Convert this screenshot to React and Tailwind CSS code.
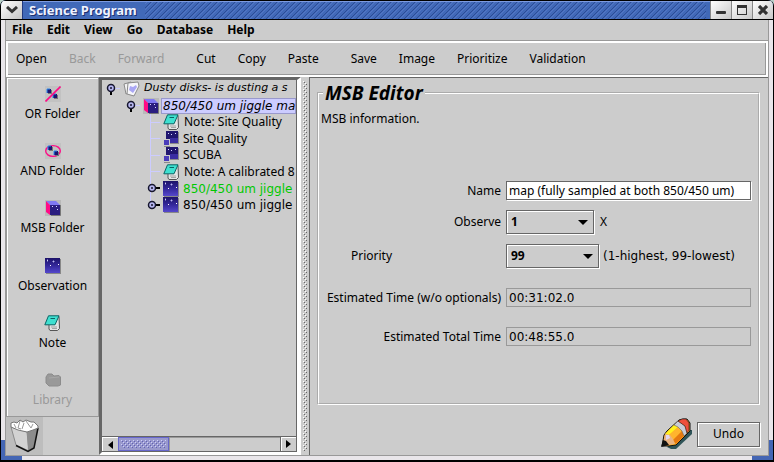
import React from "react";

const MENUS = ["File", "Edit", "View", "Go", "Database", "Help"];

const TOOL_GROUPS = [
  [{ label: "Open" }, { label: "Back", disabled: true }, { label: "Forward", disabled: true }],
  [{ label: "Cut" }, { label: "Copy" }, { label: "Paste" }],
  [{ label: "Save" }, { label: "Image" }, { label: "Prioritize" }, { label: "Validation" }],
];

function Cubelet({ x, y, s = 5 }) {
  return (
    <g>
      <rect x={x + 1} y={y + 1} width={s} height={s} fill="#777" />
      <rect x={x} y={y} width={s} height={s} fill="#1c1470" />
      <path d={`M${x} ${y + s}V${y}H${x + s - 1}`} stroke="#2a8cf0" fill="none" />
    </g>
  );
}

function OrIcon() {
  return (
    <svg width="16" height="16" viewBox="0 0 16 16" aria-hidden="true">
      <rect width="16" height="16" fill="#c2c2c2" />
      <Cubelet x={2} y={3} s={4} />
      <Cubelet x={8} y={8} s={4} />
      <path d="M0.5 15.5L15.5 0.5" stroke="#ff0a86" strokeWidth="1.6" />
    </svg>
  );
}

function AndIcon() {
  return (
    <svg width="16" height="16" viewBox="0 0 16 16" aria-hidden="true">
      <rect width="16" height="16" fill="#c2c2c2" />
      <ellipse cx="8" cy="8" rx="7.3" ry="5.4" fill="none" stroke="#ff0a86" strokeWidth="1.4" />
      <Cubelet x={3} y={3} s={4} />
      <Cubelet x={9} y={8} s={4} />
    </svg>
  );
}

function MsbIcon() {
  return (
    <svg width="16" height="16" viewBox="0 0 16 16" className="shrink-0" aria-hidden="true">
      <rect width="16" height="16" fill="#b9b9b9" />
      <path d="M1 1H11L15 5H5Z" fill="#7f78f2" />
      <path d="M1 1L5 5V15L1 12Z" fill="#ff0a86" />
      <rect x="5" y="5" width="10" height="10" fill="#2a1d80" />
      <path d="M7 6h1v1h-1zM11 6h1v1h-1zM12 9h1v1h-1z" fill="#d8d8ff" />
      <path d="M6 15.5H15.5V5" stroke="#777" fill="none" />
    </svg>
  );
}

function ObservationIcon() {
  return (
    <svg width="16" height="16" viewBox="0 0 16 16" className="shrink-0" aria-hidden="true">
      <defs>
        <linearGradient id="night" x1="0" y1="0" x2="0" y2="1">
          <stop offset="0" stopColor="#1c1268" />
          <stop offset="0.5" stopColor="#33279a" />
          <stop offset="1" stopColor="#5548cc" />
        </linearGradient>
      </defs>
      <rect x="1" y="1" width="15" height="15" fill="#888" />
      <rect width="15" height="15" fill="url(#night)" />
      <path d="M2 2h1v1h-1zM8 3h1v1h-1zM5 7h1v1h-1zM13 6h1v1h-1z" fill="#fff" />
      <path d="M7 3.500h3M8.500 2v3M2.500 1v3" stroke="#a7a0e8" strokeWidth="0.500" />
    </svg>
  );
}

function ComponentIcon() {
  return (
    <svg width="16" height="16" viewBox="0 0 16 16" className="shrink-0" aria-hidden="true">
      <path d="M4 1h12v12h-9v3H1V10h3z" fill="#8a8a8a" />
      <rect x="3" y="0" width="12" height="11" fill="#20166f" />
      <rect x="7" y="7" width="8" height="5" fill="#3a2da2" />
      <rect x="0" y="8" width="7" height="7" fill="#cbcbcb" />
      <rect x="1" y="9" width="5" height="5" fill="#4a3cba" />
      <path d="M5 2h1v1h-1zM8 3h1v1h-1zM12 2h1v1h-1z" fill="#d8d8ff" />
    </svg>
  );
}

function NoteIcon() {
  return (
    <svg width="17" height="16" viewBox="0 0 17 16" className="shrink-0" aria-hidden="true">
      <path d="M6 4L15 1.500L15.500 13.500L13.500 15.500H6L5 14V10" fill="#e4e4e4" stroke="#555" />
      <path d="M7 12h6M8 13.500h5" stroke="#a5a5a5" />
      <path d="M4.500 0.800H15L11 9.800H0.800Z" fill="#3fe0d0" stroke="#0b6464" />
      <path d="M6.500 3.500H11" stroke="#0b6464" />
    </svg>
  );
}

function LibraryIcon() {
  return (
    <svg width="16" height="16" viewBox="0 0 16 16" aria-hidden="true">
      <path d="M1 5L3 2H7L9 4L14 3.500L15.500 5V13L13 14H4L1 11Z" fill="#999" stroke="#8c8c8c" />
      <path d="M4 6L9 5.500L14 5" stroke="#a8a8a8" fill="none" />
    </svg>
  );
}

function ProgramIcon() {
  return (
    <svg width="17" height="16" viewBox="0 0 17 16" className="shrink-0" aria-hidden="true">
      <path d="M1 3L8 1L10 11L3 13Z" fill="#f2f2f2" stroke="#8a8a8a" />
      <path d="M5 2L15 1L16 5L11 15L4 13Z" fill="#f6f6fa" stroke="#8a8a8a" />
      <path d="M7 5L10 6L13 4L14 6L10 12L6 9Z" fill="#a9a6f4" />
    </svg>
  );
}

function TrashIcon() {
  return (
    <svg width="37" height="38" viewBox="0 0 37 38" className="bg-[#bdbdbd]" aria-hidden="true">
      <path d="M5 10L21 15L23 34L10 28Z" fill="#d2d2d2" stroke="#8a8a8a" />
      <path d="M21 15L32 11L28 31L22 34Z" fill="#8c8c8c" />
      <path d="M32 11L28 31L22 34.500L10 28.500" fill="none" stroke="#111" strokeWidth="1.500" />
      <path d="M5 10L5 6L8 5L11 6L14 3L17 5L20 3L25 5L28 5L32 9L32 11L27 13L21 15L12 13Z" fill="#fff" stroke="#777" />
      <path d="M8 7L10 11M14 4L12 11L15 12M18 6L16 12M20 4L25 11M27 7L25 11" stroke="#999" fill="none" />
    </svg>
  );
}

function PencilIcon() {
  return (
    <svg width="32" height="32" viewBox="0 0 32 32" aria-hidden="true">
      <path d="M6 29L10 31H15L31 16V12L28 12Z" fill="#2f5458" />
      <path d="M1 28L3 17L6 13L18 2L22 1H26L29 5V13L15 27L8 28Z" fill="#ffac1c" stroke="#111" />
      <path d="M4 16L13 7L17 9L8 17Z" fill="#fff21e" />
      <path d="M8 17L17 9L21 13L12 22Z" fill="#ffb52e" />
      <path d="M12 22L21 13L23 18L15 26Z" fill="#e67a10" />
      <path d="M13 7L17 3L24 8L26 15L23 18L21 13L17 9Z" fill="#c9ccd6" stroke="#555" strokeWidth="0.500" />
      <path d="M17 3L21 1H25L28 5V12L26 15L24 8Z" fill="#ee4f3c" stroke="#111" strokeWidth="0.500" />
      <path d="M4 16L9 17L12 21L14 26L7 27L2 26Z" fill="#e9b382" />
      <path d="M5 17L8 17L9 20L5 22Z" fill="#e2d6ee" />
      <path d="M0 29L2 22L5 23L8 27Z" fill="#111" />
    </svg>
  );
}

const PALETTE = [
  { label: "OR Folder", Icon: OrIcon },
  { label: "AND Folder", Icon: AndIcon },
  { label: "MSB Folder", Icon: MsbIcon },
  { label: "Observation", Icon: ObservationIcon },
  { label: "Note", Icon: NoteIcon },
  { label: "Library", Icon: LibraryIcon, disabled: true },
];

function Knob({ x, open }) {
  return (
    <g>
      <path d={open ? `M${x} 8V15` : `M${x} 8H${x + 8}`} stroke="#000" strokeWidth="2" />
      <circle cx={x} cy="8" r="3.500" fill="#b6b6f0" stroke="#16162e" strokeWidth="1.500" />
      <circle cx={x} cy="8" r="1" fill="#16162e" />
    </g>
  );
}

function RootGuide() {
  return (
    <svg width="21" height="17" className="shrink-0" aria-hidden="true">
      <path d="M13 8.500H18" stroke="#ccccff" />
      <Knob x={9} open />
    </svg>
  );
}

function FolderGuide() {
  return (
    <svg width="41" height="17" className="shrink-0" aria-hidden="true">
      <path d="M33 8.500H38" stroke="#ccccff" />
      <Knob x={29} open />
    </svg>
  );
}

function LeafGuide({ knob, last }) {
  return (
    <svg width="61" height="17" className="shrink-0" aria-hidden="true">
      <path d={last ? "M48.500 0V8" : "M48.500 0V17"} stroke="#ccccff" />
      {knob ? <Knob x={50} /> : <path d="M48 8.500H58" stroke="#ccccff" />}
    </svg>
  );
}

function Leaf({ icon, children, tall, knob, last, className = "" }) {
  return (
    <li role="treeitem" className={`flex items-center overflow-hidden ${tall ? "h-[17px]" : "h-4"}`}>
      <LeafGuide knob={knob} last={last} />
      {icon}
      <span className={className}>{children}</span>
    </li>
  );
}

function Tree() {
  return (
    <ul role="tree" aria-label="Science program" className="flex-1 whitespace-nowrap">
      <li role="treeitem" className="flex h-[17px] items-center">
        <RootGuide />
        <ProgramIcon />
        <span className="pl-1 font-['DejaVu_Sans',sans-serif] text-[11px] italic">Dusty disks- is dusting a s</span>
      </li>
      <li role="treeitem" aria-selected="true" className="flex h-[17px] items-center">
        <FolderGuide />
        <MsbIcon />
        <span className="ml-0.5 h-4 flex-1 border border-[#9999cc] bg-[#ccccff] pl-px font-['DejaVu_Sans',sans-serif] leading-[14px] italic">
          850/450 um jiggle ma
        </span>
      </li>
      <Leaf icon={<NoteIcon />} className="pl-1">Note: Site Quality</Leaf>
      <Leaf tall icon={<ComponentIcon />} className="pl-1">Site Quality</Leaf>
      <Leaf icon={<ComponentIcon />} className="pl-1">SCUBA</Leaf>
      <Leaf tall icon={<NoteIcon />} className="pl-1">Note: A calibrated 8</Leaf>
      <Leaf tall knob icon={<ObservationIcon />} className="pl-1 font-['DejaVu_Sans',sans-serif] text-[#00c800]">
        850/450 um jiggle
      </Leaf>
      <Leaf knob last icon={<ObservationIcon />} className="pl-1 font-['DejaVu_Sans',sans-serif]">
        850/450 um jiggle
      </Leaf>
    </ul>
  );
}

function ScrollBar() {
  return (
    <div className="flex h-4 border-y border-[#666] bg-[#cccccc]">
      <button aria-label="Scroll left" className="flex w-4 items-center justify-center border-l border-t border-white">
        <svg width="5" height="8" aria-hidden="true"><path d="M5 0V8L0 4Z" /></svg>
      </button>
      <div className="w-[51px] border border-[#6666cc] bg-[#9999cc] p-0.5">
        <svg width="100%" height="100%" aria-hidden="true">
          <defs>
            <pattern id="grip" width="4" height="4" patternUnits="userSpaceOnUse">
              <path d="M0 0h1v1H0zM2 2h1v1H2z" fill="#ccccff" />
              <path d="M1 1h1v1H1zM3 3h1v1H3z" fill="#6060b8" />
            </pattern>
          </defs>
          <rect width="100%" height="100%" fill="url(#grip)" />
        </svg>
      </div>
      <div className="flex-1 border-l border-t border-[#999]" />
      <button aria-label="Scroll right" className="flex w-4 items-center justify-center border-l border-[#666] shadow-[inset_1px_1px_#fff]">
        <svg width="5" height="8" aria-hidden="true"><path d="M0 0V8L5 4Z" /></svg>
      </button>
    </div>
  );
}

function Divider() {
  return (
    <div role="separator" aria-orientation="vertical" className="flex w-2 shrink-0 justify-center py-1">
      <svg width="4" height="100%" aria-hidden="true">
        <defs>
          <pattern id="bumps" width="4" height="4" patternUnits="userSpaceOnUse">
            <path d="M0 0h1v1H0zM2 2h1v1H2z" fill="#fff" />
            <path d="M1 1h1v1H1zM3 3h1v1H3z" fill="#666" />
          </pattern>
        </defs>
        <rect width="4" height="100%" fill="url(#bumps)" />
      </svg>
    </div>
  );
}

function Combo({ id, value, className }) {
  return (
    <div className={`relative ${className}`}>
      <select
        id={id}
        defaultValue={value}
        className="h-6 w-full appearance-none border border-[#666] bg-[#cccccc] pl-1 font-bold shadow-[1px_1px_#fff,inset_1px_1px_#fff]"
      >
        <option>{value}</option>
      </select>
      <svg width="10" height="5" className="pointer-events-none absolute right-1.5 top-2.5" aria-hidden="true">
        <path d="M0 0H10L5 5Z" />
      </svg>
    </div>
  );
}

function Editor() {
  return (
    <section className="flex min-w-0 flex-1 flex-col border-l border-t border-[#666] pt-[3px] pr-2 pl-[7px]">
      <fieldset className="min-w-0 flex-1 border-2 border-white px-0.5 [border-style:groove]">
        <legend className="ml-0.5 px-0.5 text-[19px] leading-6 font-bold italic">MSB Editor</legend>
        <p className="mt-1.5 leading-4">MSB information.</p>
        <div className="mt-[54px] grid grid-cols-[180px_1fr] items-center gap-x-[5px] pr-[5px] text-right">
          <label htmlFor="name">Name</label>
          <input
            id="name"
            defaultValue="map (fully sampled at both 850/450 um)"
            className="h-[19px] w-full min-w-0 border border-[#666] bg-white px-0.5 shadow-[1px_1px_#fff]"
          />
          <label htmlFor="observe" className="mt-2.5">Observe</label>
          <div className="mt-2.5 flex items-center gap-1.5">
            <Combo id="observe" value="1" className="w-[88px]" />
            <span>X</span>
          </div>
          <label htmlFor="priority" className="mt-2.5 pr-[109px]">Priority</label>
          <div className="mt-2.5 flex items-center gap-1">
            <Combo id="priority" value="99" className="w-[93px]" />
            <span className="font-['DejaVu_Sans',sans-serif] whitespace-nowrap">(1-highest, 99-lowest)</span>
          </div>
          <label htmlFor="time" className="mt-5 whitespace-nowrap">Estimated Time (w/o optionals)</label>
          <input
            id="time"
            readOnly
            defaultValue="00:31:02.0"
            className="mt-5 h-[19px] w-full min-w-0 border border-[#999] bg-transparent px-0.5 font-['DejaVu_Sans',sans-serif]"
          />
          <label htmlFor="total" className="mt-5">Estimated Total Time</label>
          <input
            id="total"
            readOnly
            defaultValue="00:48:55.0"
            className="mt-5 h-[19px] w-full min-w-0 border border-[#999] bg-transparent px-0.5 font-['DejaVu_Sans',sans-serif]"
          />
        </div>
      </fieldset>
      <div className="flex h-[50px] items-center justify-end gap-1 pt-2">
        <PencilIcon />
        <button className="h-[25px] w-[63px] border border-[#666] shadow-[1px_1px_#fff,inset_1px_1px_#fff]">Undo</button>
      </div>
    </section>
  );
}

const FRAME_BUTTON =
  "flex h-full w-[21px] items-center justify-center border-l border-[#888] bg-linear-to-br from-white to-[#c8c8c8]";

function TitleBar() {
  return (
    <header className="flex h-5 items-stretch border-b border-t border-black bg-[#4169b8]">
      <button aria-label="Window menu" className="flex w-[22px] items-center justify-center border-r border-[#223a80] bg-linear-to-br from-white to-[#c4c4c4]">
        <svg width="12" height="8" aria-hidden="true">
          <path d="M1 1L6 5.500L11 1" fill="none" stroke="#333" strokeWidth="3" />
        </svg>
      </button>
      <h1 className="border-t border-[#7d9be0] pr-2 pl-1.5 text-[13px] leading-[17px] font-bold text-[#f0f3ff] [text-shadow:1px_1px_#1c2f70]">
        Science Program
      </h1>
      <div className="flex-1 border-t border-[#7d9be0]">
        <svg width="100%" height="100%" aria-hidden="true">
          <defs>
            <pattern id="hatch" width="6" height="6" patternUnits="userSpaceOnUse">
              <path d="M-1 7L7 -1M-1 1L1 -1M5 7L7 5" stroke="#2c4c96" />
              <path d="M-1 9L9 -1M-1 3L3 -1" stroke="#5f80cc" strokeWidth="0.600" />
            </pattern>
          </defs>
          <rect width="100%" height="100%" fill="url(#hatch)" />
        </svg>
      </div>
      <div className="w-1 border-t border-[#7d9be0]" />
      <button aria-label="Minimize" className={FRAME_BUTTON}>
        <svg width="10" height="10" aria-hidden="true"><rect y="6" width="10" height="3" rx="1" fill="#333" /></svg>
      </button>
      <button aria-label="Maximize" className={FRAME_BUTTON}>
        <svg width="10" height="10" aria-hidden="true">
          <rect x="0.500" y="0.500" width="9" height="9" fill="none" stroke="#333" />
          <rect width="10" height="3" fill="#333" />
        </svg>
      </button>
      <button aria-label="Close" className={FRAME_BUTTON}>
        <svg width="10" height="10" aria-hidden="true">
          <path d="M1 1L9 9M9 1L1 9" stroke="#333" strokeWidth="3.200" />
        </svg>
      </button>
    </header>
  );
}

export default function App() {
  return (
    <div className="bg-[#b7d0c8] font-['Noto_Sans','Open_Sans',sans-serif] text-xs text-black">
      <div className="relative flex min-h-screen flex-col overflow-hidden rounded-t-md border-x border-b-2 border-black bg-[#e9e6ea]">
        <TitleBar />
        <div className="mx-1 mb-1 flex flex-1 flex-col border border-t-0 border-[#999] bg-[#cccccc]">
          <nav className="flex h-[21px] items-center gap-3.5 border-b border-[#999] pl-1.5 font-bold">
            {MENUS.map((m) => (
              <button key={m}>{m}</button>
            ))}
          </nav>
          <div role="toolbar" className="flex h-9 items-center gap-8 border-2 border-white px-2 shadow-[inset_-1px_-1px_#999]">
            {TOOL_GROUPS.map((group, i) => (
              <div key={i} className="flex gap-[22px]">
                {group.map((t) => (
                  <button key={t.label} disabled={t.disabled} className="disabled:text-[#999]">
                    {t.label}
                  </button>
                ))}
              </div>
            ))}
          </div>
          <main className="flex flex-1">
            <aside className="flex w-[93px] shrink-0 flex-col">
              <div className="flex flex-1 flex-col justify-between border border-[#999] pt-2 pb-2 shadow-[inset_1px_1px_#fff]">
                {PALETTE.map(({ label, Icon, disabled }) => (
                  <button key={label} disabled={disabled} className="flex flex-col items-center gap-1 disabled:text-[#999]">
                    <Icon />
                    <span className="leading-4">{label}</span>
                  </button>
                ))}
              </div>
              <button aria-label="Trash" className="self-start">
                <TrashIcon />
              </button>
            </aside>
            <div className="flex w-[202px] shrink-0 flex-col border-t-[3px] border-r-4 border-b-[3px] border-l-[3px] border-t-[#666] border-r-white border-b-white border-l-[#666]">
              <div className="flex flex-1 flex-col overflow-hidden border-r border-[#666]">
                <Tree />
                <ScrollBar />
              </div>
            </div>
            <Divider />
            <Editor />
          </main>
        </div>
        <div className="absolute bottom-0 left-0 h-5 w-[21px] border-b-4 border-l-4 border-[#4466b4]" />
        <div className="absolute right-0 bottom-0 h-5 w-[21px] border-r-4 border-b-4 border-[#4466b4]" />
      </div>
    </div>
  );
}
